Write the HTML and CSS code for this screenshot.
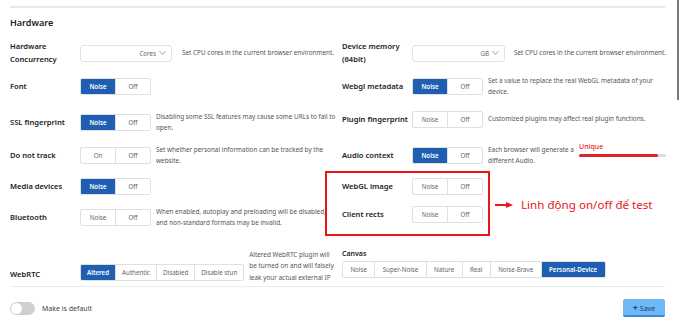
FILE: index.html
```html
<!DOCTYPE html>
<html lang="en">
<head>
    <meta charset="UTF-8">
    <meta name="viewport" content="width=device-width, initial-scale=1.0">
    <title>Hardware settings</title>
    <link rel="stylesheet" href="styles.css">
</head>
<body>
<div class="page">
    <div class="scrollbar"></div>
    <div class="topline"></div>
    <h2 class="title">Hardware</h2>

    <div class="columns">
        <div class="col">
            <div class="row r1">
                <div class="label">Hardware<br>Concurrency</div>
                <div class="select"><span>Cores</span><span class="chev"></span></div>
                <div class="desc">Set CPU cores in the current browser environment.</div>
            </div>
            <div class="row r2">
                <div class="label">Font</div>
                <div class="seg"><span class="on">Noise</span><span>Off</span></div>
            </div>
            <div class="row r3">
                <div class="label">SSL fingerprint</div>
                <div class="seg"><span class="on">Noise</span><span>Off</span></div>
                <div class="desc">Disabling some SSL features may cause some URLs to fail to open.</div>
            </div>
            <div class="row r4">
                <div class="label">Do not track</div>
                <div class="seg"><span>On</span><span>Off</span></div>
                <div class="desc">Set whether personal information can be tracked by the website.</div>
            </div>
            <div class="row r5">
                <div class="label">Media devices</div>
                <div class="seg"><span class="on">Noise</span><span>Off</span></div>
            </div>
            <div class="row r6">
                <div class="label">Bluetooth</div>
                <div class="seg"><span>Noise</span><span>Off</span></div>
                <div class="desc wide">When enabled, autoplay and preloading will be disabled, and non-standard formats may be invalid.</div>
            </div>
            <div class="row r7">
                <div class="label">WebRTC</div>
                <div class="seg multi"><span class="on">Altered</span><span>Authentic</span><span>Disabled</span><span>Disable stun</span></div>
                <div class="desc narrow">Altered WebRTC plugin will be turned on and will falsely leak your actual external IP</div>
            </div>
        </div>

        <div class="col">
            <div class="row r1">
                <div class="label">Device memory<br>(64bit)</div>
                <div class="select"><span>GB</span><span class="chev"></span></div>
                <div class="desc">Set CPU cores in the current browser environment.</div>
            </div>
            <div class="row r2">
                <div class="label">Webgl metadata</div>
                <div class="seg"><span class="on">Noise</span><span>Off</span></div>
                <div class="desc">Set a value to replace the real WebGL metadata of your device.</div>
            </div>
            <div class="row q3">
                <div class="label">Plugin fingerprint</div>
                <div class="seg"><span>Noise</span><span>Off</span></div>
                <div class="desc">Customized plugins may affect real plugin functions.</div>
            </div>
            <div class="row q4">
                <div class="label">Audio context</div>
                <div class="seg"><span class="on">Noise</span><span>Off</span></div>
                <div class="desc short">Each browser will generate a different Audio.</div>
                <div class="unique">
                    <div class="unique-label">Unique</div>
                    <div class="bar"><div class="fill" style="width: 91%"></div></div>
                </div>
            </div>
            <div class="row q5">
                <div class="label">WebGL image</div>
                <div class="seg"><span>Noise</span><span>Off</span></div>
            </div>
            <div class="row q6">
                <div class="label">Client rects</div>
                <div class="seg"><span>Noise</span><span>Off</span></div>
            </div>
            <div class="canvas-row">
                <div class="label">Canvas</div>
                <div class="seg multi"><span>Noise</span><span>Super-Noise</span><span>Nature</span><span>Real</span><span>Noise-Brave</span><span class="on">Personal-Device</span></div>
            </div>
        </div>
    </div>

    <div class="divider"></div>

    <div class="footer">
        <div class="default">
            <span class="switch"><span class="knob"></span></span>
            <span>Make is default</span>
        </div>
        <button class="save"><span class="plus">+</span> Save</button>
    </div>

    <!-- annotation -->
    <div class="note-box"></div>
    <div class="note">
        <svg width="18" height="6" viewBox="0 0 18 6"><path d="M0 3H12" stroke="#e8161b" stroke-width="2"/><path d="M11 0L18 3L11 6Z" fill="#e8161b"/></svg>
        <span>Linh động on/off để test</span>
    </div>
</div>
</body>
</html>
```

FILE: styles.css
```css
body {
    margin: 0;
    padding: 0;
    background-color: #fff;
    font-family: 'Noto Sans', sans-serif;
    color: #222;
}
.page {
    position: relative;
    width: 690px;
    height: 324px;
    overflow: hidden;
}
.scrollbar {
    position: absolute;
    left: 677px;
    top: 0;
    width: 2px;
    height: 100px;
    background-color: #777;
}
.topline {
    margin: 6px 0 0 10px;
    width: 655px;
    height: 2px;
    background-color: #e8e8e8;
}
.title {
    margin: 9px 0 0 10px;
    height: 19px;
    font-size: 9px;
    font-weight: 600;
    line-height: 12px;
}
.columns {
    display: flex;
    padding-left: 10px;
}
.col {
    display: flex;
    flex-direction: column;
}
.col:first-child {
    width: 332px;
}
.row {
    display: flex;
    align-items: center;
}
.r1 { height: 34px; }
.r2 { height: 32px; }
.r3 { height: 40px; }
.r4 { height: 26px; }
.r5 { height: 36px; }
.r6 { height: 26px; }
.r7 {
    height: 53px;
    align-items: flex-end;
}
.q3 { height: 34px; }
.q4 { height: 38px; }
.q5 { height: 24px; }
.q6 { height: 32px; }
.label {
    width: 70px;
    flex-shrink: 0;
    font-size: 7.6px;
    font-weight: 600;
    line-height: 13px;
    color: #222;
}
.r7 .label {
    padding-bottom: 2px;
}
.select {
    flex-shrink: 0;
    width: 84px;
    height: 15px;
    border: 1px solid #e2e2e2;
    border-radius: 3px;
    display: flex;
    align-items: center;
    justify-content: flex-end;
    gap: 4px;
    padding-right: 6px;
    box-sizing: content-box;
    font-size: 6.2px;
    color: #666;
    margin-right: 10px;
}
.col:last-child .select {
    width: 85px;
    margin-right: 9px;
}
.chev {
    width: 4px;
    height: 4px;
    border-right: 1px solid #bbb;
    border-bottom: 1px solid #bbb;
    transform: rotate(45deg);
    margin-top: -3px;
}
.seg {
    display: flex;
    flex-shrink: 0;
    height: 15px;
    border: 1px solid #e0e0e0;
    border-radius: 2px;
    margin-right: 5px;
    overflow: hidden;
}
.seg span {
    width: 34px;
    display: flex;
    align-items: center;
    justify-content: center;
    font-size: 6.2px;
    color: #666;
    border-left: 1px solid #e0e0e0;
}
.seg span:first-child {
    border-left: none;
}
.seg span.on {
    background-color: #1f5fb3;
    color: #fff;
    font-weight: 600;
}
.multi span {
    width: auto;
    padding: 0 6px;
}
.r7 .multi {
    margin-bottom: 2px;
}
.desc {
    width: 180px;
    font-size: 6.4px;
    line-height: 11.5px;
    color: #555;
}
.desc.wide {
    width: 182px;
}
.desc.narrow {
    width: 86px;
}
.desc.short {
    width: 88px;
}
.unique {
    margin: -12px 0 0 3px;
    width: 87px;
}
.unique-label {
    font-size: 7px;
    color: #e8262b;
    font-weight: 500;
    line-height: 11px;
}
.bar {
    height: 3px;
    margin-top: 2px;
    background-color: #ddd;
    border-radius: 2px;
}
.fill {
    height: 3px;
    background-color: #e52028;
    border-radius: 2px;
}
.canvas-row {
    margin-top: 17px;
    display: flex;
    flex-direction: column;
    align-items: flex-start;
    gap: 1px;
}
.canvas-row .label {
    width: auto;
    font-size: 7px;
}
.canvas-row .multi span {
    padding: 0 7.4px;
}
.divider {
    margin: 3px 0 0 10px;
    width: 655px;
    height: 1px;
    background-color: #ececec;
}
.footer {
    display: flex;
    justify-content: space-between;
    align-items: center;
    padding: 12px 25px 0 10px;
}
.default {
    display: flex;
    align-items: center;
    gap: 7px;
    font-size: 7px;
    color: #444;
}
.switch {
    position: relative;
    width: 25px;
    height: 13px;
    border-radius: 7px;
    background-color: #cfcfcf;
}
.knob {
    position: absolute;
    left: 1px;
    top: 1px;
    width: 11px;
    height: 11px;
    border-radius: 50%;
    background-color: #fff;
}
.save {
    width: 42px;
    height: 18px;
    border: none;
    border-bottom: 2px solid #3a8ad6;
    border-radius: 2px;
    background-color: #6db8f6;
    font-family: 'Noto Sans', sans-serif;
    font-size: 7px;
    color: #23405e;
    padding: 0;
}
.plus {
    font-size: 9px;
    font-weight: 700;
}
.note-box {
    position: absolute;
    left: 325px;
    top: 171px;
    width: 161px;
    height: 61px;
    border: 2px solid #e8161b;
}
.note {
    position: absolute;
    left: 495px;
    top: 197px;
    display: flex;
    align-items: center;
    gap: 8px;
    color: #e8161b;
    font-size: 11.6px;
    line-height: 16px;
}
```
